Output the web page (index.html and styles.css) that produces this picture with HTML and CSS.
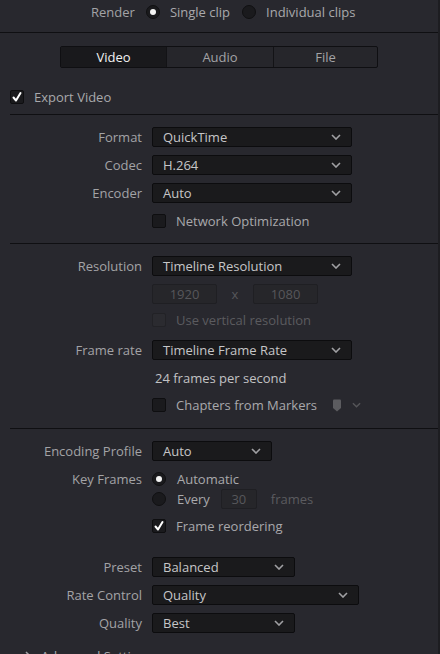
FILE: index.html
```html
<!DOCTYPE html>
<html>
<head>
<meta charset="utf-8">
<link rel="stylesheet" href="styles.css">
</head>
<body>
<div class="panel">
  <div class="render-row">
    <span class="lbl">Render</span>
    <span class="radio on"></span><span class="opt">Single clip</span>
    <span class="radio gap-l"></span><span class="opt">Individual clips</span>
  </div>

  <div class="tabs">
    <div class="tab active">Video</div>
    <div class="tab">Audio</div>
    <div class="tab">File</div>
  </div>

  <div class="export-row">
    <span class="cb checked"><svg viewBox="0 0 14 14" width="14" height="14"><polyline points="3.5,7.5 6,10.5 10.5,3" fill="none" stroke="#fff" stroke-width="2" stroke-linecap="round" stroke-linejoin="round"/></svg></span>
    <span class="opt">Export Video</span>
  </div>

  <section class="section s1">
    <div class="row"><span class="label">Format</span><div class="dd w200"><span>QuickTime</span><svg class="chev" viewBox="0 0 10 6" width="10" height="6"><polyline points="1,1 5,5 9,1"/></svg></div></div>
    <div class="row"><span class="label">Codec</span><div class="dd w200"><span>H.264</span><svg class="chev" viewBox="0 0 10 6" width="10" height="6"><polyline points="1,1 5,5 9,1"/></svg></div></div>
    <div class="row"><span class="label">Encoder</span><div class="dd w200"><span>Auto</span><svg class="chev" viewBox="0 0 10 6" width="10" height="6"><polyline points="1,1 5,5 9,1"/></svg></div></div>
    <div class="row cbrow net"><span class="label"></span><span class="cb"></span><span class="opt">Network Optimization</span></div>
  </section>

  <section class="section s2">
    <div class="row"><span class="label">Resolution</span><div class="dd w200"><span>Timeline Resolution</span><svg class="chev" viewBox="0 0 10 6" width="10" height="6"><polyline points="1,1 5,5 9,1"/></svg></div></div>
    <div class="row res"><span class="label"></span><span class="numbox dis w65">1920</span><span class="times">x</span><span class="numbox dis w65">1080</span></div>
    <div class="row cbrow vert"><span class="label"></span><span class="cb dis"></span><span class="opt dim">Use vertical resolution</span></div>
    <div class="row fr"><span class="label">Frame rate</span><div class="dd w200"><span>Timeline Frame Rate</span><svg class="chev" viewBox="0 0 10 6" width="10" height="6"><polyline points="1,1 5,5 9,1"/></svg></div></div>
    <div class="row fps"><span class="label"></span><span class="info">24 frames per second</span></div>
    <div class="row cbrow chap"><span class="label"></span><span class="cb"></span><span class="opt">Chapters from Markers</span>
      <svg class="marker" viewBox="0 0 10 13" width="10" height="13"><path d="M1,1.5 Q1,0.5 2,0.5 L8,0.5 Q9,0.5 9,1.5 L9,9 L5,12.5 L1,9 Z" fill="#5c5c60"/></svg>
      <svg class="chev small" viewBox="0 0 10 6" width="9" height="6"><polyline points="1,1 5,5 9,1"/></svg>
    </div>
  </section>

  <section class="section s3">
    <div class="row"><span class="label">Encoding Profile</span><div class="dd w120"><span>Auto</span><svg class="chev" viewBox="0 0 10 6" width="10" height="6"><polyline points="1,1 5,5 9,1"/></svg></div></div>
    <div class="row kf"><span class="label">Key Frames</span><span class="radio on"></span><span class="opt r-lbl">Automatic</span></div>
    <div class="row every"><span class="label"></span><span class="radio"></span><span class="opt r-lbl">Every</span><span class="numbox dis w36">30</span><span class="opt dim frames">frames</span></div>
    <div class="row cbrow reorder"><span class="label"></span><span class="cb checked"><svg viewBox="0 0 14 14" width="14" height="14"><polyline points="3.5,7.5 6,10.5 10.5,3" fill="none" stroke="#fff" stroke-width="2" stroke-linecap="round" stroke-linejoin="round"/></svg></span><span class="opt">Frame reordering</span></div>
    <div class="row preset"><span class="label">Preset</span><div class="dd w143"><span>Balanced</span><svg class="chev" viewBox="0 0 10 6" width="10" height="6"><polyline points="1,1 5,5 9,1"/></svg></div></div>
    <div class="row"><span class="label">Rate Control</span><div class="dd w207"><span>Quality</span><svg class="chev" viewBox="0 0 10 6" width="10" height="6"><polyline points="1,1 5,5 9,1"/></svg></div></div>
    <div class="row"><span class="label">Quality</span><div class="dd w143"><span>Best</span><svg class="chev" viewBox="0 0 10 6" width="10" height="6"><polyline points="1,1 5,5 9,1"/></svg></div></div>
    <div class="adv"><svg class="adv-chev" viewBox="0 0 6 10" width="6" height="10"><polyline points="1,1 5,5 1,9"/></svg><span>Advanced Settings</span></div>
  </section>
</div>
</body>
</html>
```

FILE: styles.css
```css
html, body {
  margin: 0;
  padding: 0;
  background: #1d1d21;
  height: 100%;
  overflow: hidden;
}
body {
  font-family: "Open Sans", "Noto Sans", sans-serif;
  font-size: 13px;
  color: #a3a3a6;
}
.panel {
  width: 438px;
  height: 654px;
  background: #28282e;
  overflow: hidden;
}
.render-row {
  height: 24px;
  padding-bottom: 8px;
  padding-left: 91px;
  display: flex;
  align-items: center;
  border-bottom: 1px solid #0f0f12;
}
.lbl { margin-right: 11px; }
.opt { color: #a9a9ac; white-space: nowrap; }
.radio {
  width: 14px;
  height: 14px;
  box-sizing: border-box;
  border-radius: 50%;
  background: #1a1a1d;
  border: 1px solid #101012;
  margin-right: 10px;
  position: relative;
  flex: none;
}
.radio.on::after {
  content: "";
  position: absolute;
  left: 3px;
  top: 3px;
  width: 6px;
  height: 6px;
  border-radius: 50%;
  background: #f4f4f4;
}
.gap-l { margin-left: 12px; }

.tabs {
  margin: 13px 0 0 60px;
  width: 318px;
  height: 22px;
  box-sizing: border-box;
  border: 1px solid #0f0f12;
  border-radius: 2px;
  display: grid;
  grid-template-columns: 105px 107px 1fr;
  background: #26262b;
}
.tab {
  display: flex;
  align-items: center;
  justify-content: center;
  color: #a3a3a6;
  border-left: 1px solid #131316;
}
.tab:first-child { border-left: none; }
.tab.active { background: #19191c; color: #f2f2f2; }

.export-row {
  margin: 18px 0 0 10px;
  height: 22px;
  display: flex;
  align-items: center;
  padding-bottom: 6px;
  border-bottom: 1px solid #0f0f12;
}
.cb {
  width: 14px;
  height: 14px;
  box-sizing: border-box;
  background: #1a1a1d;
  border: 1px solid #0e0e10;
  border-radius: 2px;
  margin-right: 10px;
  flex: none;
  display: flex;
}
.cb svg { display: block; margin: -1px; }
.cb.dis { background: #2b2b30; border-color: #222226; }

.section {
  margin-left: 10px;
  border-bottom: 1px solid #0f0f12;
  padding: 12px 0 12px;
}
.row {
  display: flex;
  align-items: center;
  height: 20px;
  margin-top: 8px;
}
.row:first-child { margin-top: 0; }
.label {
  width: 132px;
  margin-right: 10px;
  text-align: right;
  flex: none;
  white-space: nowrap;
}
.dd {
  height: 20px;
  box-sizing: border-box;
  background: #1a1a1c;
  border: 1px solid #0c0c0e;
  border-radius: 2px;
  display: flex;
  align-items: center;
  justify-content: space-between;
  padding: 0 10px 0 10px;
  color: #c6c6c8;
}
.w200 { width: 200px; }
.w120 { width: 120px; }
.w143 { width: 143px; }
.w207 { width: 207px; }
.chev polyline {
  fill: none;
  stroke: #a0a0a3;
  stroke-width: 1.6;
}
.net { margin-top: 7px; height: 21px; }
.s2 { padding-top: 12px; padding-bottom: 13px; }
.numbox {
  height: 20px;
  box-sizing: border-box;
  display: flex;
  align-items: center;
  justify-content: center;
  border-radius: 2px;
}
.numbox.dis {
  background: #26262a;
  border: 1px solid #1f1f23;
  color: #57575b;
}
.w65 { width: 65px; }
.w36 { width: 36px; }
.times { color: #57575b; width: 36px; text-align: center; }
.res { margin-top: 8px; }
.vert { margin-top: 6px; }
.dim { color: #5b5b5f; }
.fr { margin-top: 10px; }
.fps { margin-top: 8px; }
.info { color: #c2c2c4; margin-left: 3px; }
.chap { margin-top: 7px; }
.marker { margin-left: 15px; }
.chev.small { margin-left: 10px; }
.chev.small polyline { stroke: #555559; }

.s3 { border-bottom: none; }
.r-lbl { margin-left: 1px; }
.kf { margin-top: 8px; }
.every { margin-top: 0; }
.every .numbox { margin-left: 11px; margin-right: 14px; }
.reorder { margin-top: 7px; }
.preset { margin-top: 21px; }
.adv {
  margin-top: 13px;
  margin-left: 15px;
  height: 20px;
  display: flex;
  align-items: center;
  color: #a9a9ac;
}
.adv-chev { margin-right: 10px; }
.adv-chev polyline { fill: none; stroke: #a0a0a3; stroke-width: 1.5; }
```
